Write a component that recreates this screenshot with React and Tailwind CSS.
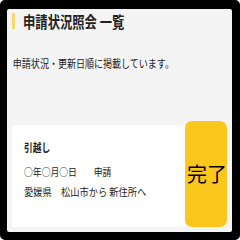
export default function App() {
  const font = { fontFamily: '"Noto Sans CJK JP", "Noto Sans", sans-serif' };
  return (
    <div className="w-[240px] h-[240px] bg-white">
      <div className="w-[240px] h-[240px] bg-black rounded-[5px] pt-[9px] pl-[7px] pr-[8px] pb-[8px]" style={font}>
        <div className="w-full h-full bg-[#f4f4f4] rounded-[2px] px-[5px] pt-[4px] flex flex-col text-[#222]">
          <div className="flex items-center h-[16px] gap-[8px]">
            <div className="w-[3px] h-[16px] bg-[#f6d86c]" />
            <div className="text-[16px] leading-[16px] font-bold whitespace-nowrap origin-left scale-x-[0.77]">申請状況照会 一覧</div>
          </div>
          <div className="mt-[26px] text-[11px] leading-[16px] pl-[1px] whitespace-nowrap origin-left scale-x-[0.82]">申請状況・更新日順に掲載しています。</div>
          <div className="mt-[50px] flex items-end">
            <div className="flex-1 h-[102px] bg-white rounded-l-[3px] pl-[12px] pt-[14px] flex flex-col">
              <div className="text-[11px] leading-[16px] font-bold whitespace-nowrap origin-left scale-x-[0.79]">引越し</div>
              <div className="mt-[9px] text-[10.5px] leading-[16px] flex gap-[20px] whitespace-nowrap origin-left scale-x-[0.84]"><span>○年○月○日</span><span>申請</span></div>
              <div className="mt-[4px] text-[10.5px] leading-[16px] whitespace-nowrap origin-left scale-x-[0.88]">愛媛県　松山市から 新住所へ</div>
            </div>
            <div className="w-[42px] h-[106px] bg-[#fcc71d] rounded-[7px] flex items-center justify-center pl-[2px] text-[20px] text-black whitespace-nowrap">完了</div>
          </div>
        </div>
      </div>
    </div>
  );
}
